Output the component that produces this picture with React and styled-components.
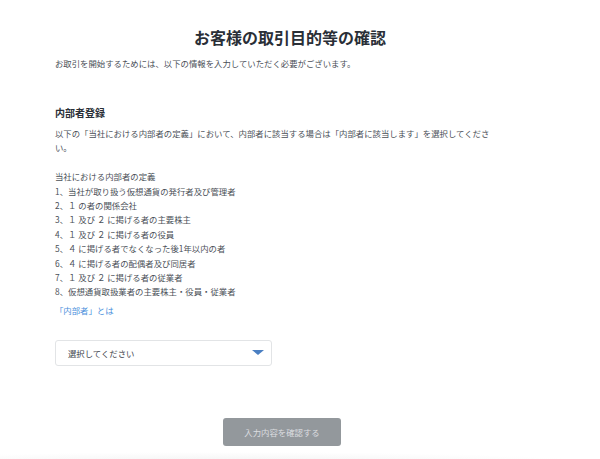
import styled, { createGlobalStyle } from 'styled-components';

const GlobalStyle = createGlobalStyle`
  html, body {
    margin: 0;
    padding: 0;
    background: #fff;
  }
  body {
    font-family: "Noto Sans CJK JP", "Noto Sans", sans-serif;
    color: #4a4f57;
  }
`;

const Page = styled.main`
  width: 470px;
  padding: 25px 0 0 55px;
`;

const Title = styled.h1`
  margin: 0;
  font-size: 16px;
  line-height: 24px;
  font-weight: 700;
  text-align: center;
  color: #2a2f37;
`;

const Lead = styled.p`
  margin: 7px 0 0;
  font-size: 8.4px;
  line-height: 14px;
`;

const Section = styled.section`
  margin-top: 35px;
`;

const SectionTitle = styled.h2`
  margin: 0;
  font-size: 10px;
  line-height: 16px;
  font-weight: 700;
  color: #2a2f37;
`;

const Text = styled.p`
  margin: ${({ $gap }) => $gap || '0'};
  font-size: 8.4px;
  line-height: 14.4px;
  width: 445px;
`;

const DefList = styled.ol`
  margin: 0;
  padding: 0;
  list-style: none;
  font-size: 8.4px;
  line-height: 14.4px;
`;

const Link = styled.a`
  display: block;
  margin-top: 4.6px;
  font-size: 8.4px;
  line-height: 14.4px;
  color: #4a8fdc;
  text-decoration: none;
`;

const Select = styled.div`
  margin-top: 22px;
  width: 217px;
  height: 26px;
  box-sizing: border-box;
  border: 1px solid #e2e4e6;
  border-radius: 3px;
  display: flex;
  align-items: center;
  justify-content: space-between;
  padding: 0 7px 0 12px;
  font-size: 8.4px;
  color: #3d424a;
`;

const Caret = styled.span`
  width: 0;
  height: 0;
  border-left: 6px solid transparent;
  border-right: 6px solid transparent;
  border-top: 5px solid #4a7fc2;
`;

const ButtonRow = styled.div`
  margin-top: 52px;
  display: flex;
  justify-content: center;
  padding-right: 16px;
`;

const Button = styled.button`
  width: 118px;
  height: 28px;
  border: none;
  border-radius: 3px;
  background: #93989c;
  color: #dcdee0;
  font-family: inherit;
  font-size: 8.4px;
  cursor: default;
`;

const Footer = styled.div`
  margin-top: 6px;
  height: 10px;
  background: radial-gradient(ellipse 60% 100% at 38% 100%, #f3f3f3 0%, #fafafa 60%, #fff 100%);
`;

const items = [
  '1、当社が取り扱う仮想通貨の発行者及び管理者',
  '2、１ の者の関係会社',
  '3、１ 及び ２ に掲げる者の主要株主',
  '4、１ 及び ２ に掲げる者の役員',
  '5、４ に掲げる者でなくなった後1年以内の者',
  '6、４ に掲げる者の配偶者及び同居者',
  '7、１ 及び ２ に掲げる者の従業者',
  '8、仮想通貨取扱業者の主要株主・役員・従業者',
];

export default function App() {
  return (
    <>
      <GlobalStyle />
      <Page>
        <Title>お客様の取引目的等の確認</Title>
        <Lead>お取引を開始するためには、以下の情報を入力していただく必要がございます。</Lead>
        <Section>
          <SectionTitle>内部者登録</SectionTitle>
          <Text $gap="5px 0 14.4px">
            以下の「当社における内部者の定義」において、内部者に該当する場合は「内部者に該当します」を選択してください。
          </Text>
          <Text>当社における内部者の定義</Text>
          <DefList>
            {items.map(item => (
              <li key={item}>{item}</li>
            ))}
          </DefList>
          <Link href="#">「内部者」とは</Link>
          <Select>
            <span>選択してください</span>
            <Caret />
          </Select>
        </Section>
        <ButtonRow>
          <Button>入力内容を確認する</Button>
        </ButtonRow>
      </Page>
      <Footer />
    </>
  );
}
